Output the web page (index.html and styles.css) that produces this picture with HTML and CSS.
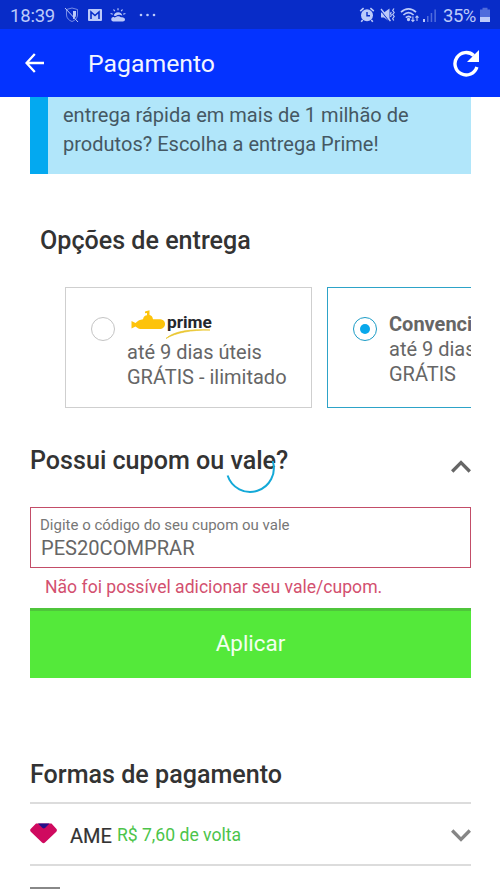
FILE: index.html
```html
<!DOCTYPE html>
<html lang="pt-BR">
<head>
<meta charset="utf-8">
<title>Pagamento</title>
<link rel="stylesheet" href="styles.css">
</head>
<body>
<div class="status">
  <span class="clock">18:39</span>
  <svg class="st-shield" width="16" height="16" viewBox="0 0 16 16" fill="none" stroke="currentColor"><path d="M2.500 2.500 8 1l5.500 1.500V8c0 3-2.500 5.500-5.500 6.500C5 13.500 2.500 11 2.500 8z" opacity=".6"/><path d="M9 4h3v4c0 2-1.500 3.500-3 4.300z" fill="currentColor" stroke="none"/><path d="M1 1l13 14" stroke-width="1"/></svg>
  <svg class="st-mail" width="14" height="12" viewBox="0 0 14 12"><rect width="14" height="12" rx="1" fill="currentColor"/><path d="M3 10V3l4 3.500L11 3v7" fill="none" stroke="#082cc8" stroke-width="1.600"/></svg>
  <svg class="st-weather" width="16" height="14" viewBox="0 0 16 14" fill="currentColor"><path d="M3 13.500a2.300 2.300 0 0 1 0-4.500c1 0 1.500.3 2 .6C6 8 9.500 7.500 11 9.300c2-.5 4 .5 4 2.200 0 1.200-.9 2-2.200 2z"/><path d="M3.800 7.800a4.300 4.300 0 0 1 8.500 0c-2-1.300-4.500-1.300-6.500.3z"/><path d="M8 .3v2M3.500 1.500l1.300 1.700M12.500 1.500l-1.300 1.700M.6 5.500l2.200.8M15.400 5.500l-2.200.8" stroke="currentColor" stroke-width="1.200"/></svg>
  <svg class="st-dots" width="17" height="4" viewBox="0 0 17 4" fill="currentColor"><circle cx="2" cy="2" r="1.300"/><circle cx="8.500" cy="2" r="1.300"/><circle cx="15" cy="2" r="1.300"/></svg>
  <span class="status-right">
    <svg width="16" height="16" viewBox="0 0 16 16" fill="none" stroke="currentColor"><circle cx="8" cy="8.300" r="6" fill="currentColor" stroke="none"/><path d="M8 5v3.800h3" stroke="#082cc8" stroke-width="1.400"/><path d="M1.200 4.200 4.600 1.200M14.800 4.200 11.400 1.200M3.700 13 2.200 14.800M12.300 13l1.500 1.800" stroke-width="1.600"/></svg>
    <svg class="st-mute" width="16" height="16" viewBox="0 0 16 16"><path d="M1 5.500h3L9.500 1.500v13L4 10.500H1z" fill="currentColor"/><path d="M.5 3 9.500 14.500" stroke="#082cc8" stroke-width="1.200"/><path d="M1 2 10.500 14" stroke="currentColor" stroke-width="1.300"/><path d="M14 1.500l-1.300 2 1.500 2-1.500 2 1.500 2-1.500 2 1 2M11.300 5l-.8 1.500.8 1.500-.8 2" fill="none" stroke="currentColor" stroke-width="1.200"/></svg>
    <svg class="st-wifi" width="20" height="16" viewBox="0 0 20 16" fill="none" stroke="currentColor" stroke-width="1.700"><path d="M1 5.200C5.500.7 11.500.7 16 5.200M3.400 8c3.200-3 7-3 10.200 0M5.800 10.600c1.800-1.600 3.800-1.600 5.400 0"/><circle cx="8.500" cy="12.500" r=".8" fill="currentColor"/><path d="M12.900 9.500v5M11.400 12.800l1.500 1.700 1.500-1.700M17 14V9M15.500 10.700 17 9l1.500 1.700" stroke-width="1.100"/></svg>
    <svg class="st-signal" width="14" height="15" viewBox="0 0 14 15" fill="currentColor"><path d="M0 11h2v3H0z"/><path d="M4 8h1.500v6H4zM7.700 5h1.500v9H7.700zM11.400 1.500h1.500V14h-1.500z" opacity=".4"/></svg>
    <span class="percent">35%</span>
    <svg class="st-battery" width="10" height="16" viewBox="0 0 10 16" fill="currentColor"><path d="M0 2.500h2.500V.8h5v1.700H10V15H0z" opacity=".4"/><path d="M0 10h10v5H0z"/></svg>
  </span>
</div>
<header class="appbar">
  <svg class="back" width="20" height="20" viewBox="0 0 20 20" fill="none" stroke="#fff" stroke-width="2.300"><path d="M9.800 1 1.500 10l8.300 9M1.500 10H19"/></svg>
  <h1>Pagamento</h1>
  <svg class="reload" width="28" height="28" viewBox="0 0 28 28"><path d="M21.800 6.500A11.200 11.200 0 1 0 24.900 18" fill="none" stroke="#fff" stroke-width="3.400"/><path d="M27 1v12H15z" fill="#fff"/></svg>
</header>
<main>
  <p class="banner">entrega rápida em mais de 1 milhão de<br>produtos? Escolha a entrega Prime!</p>
  <h2 class="delivery-title">Opções de entrega</h2>
  <div class="carousel">
    <div class="card">
      <span class="radio"></span>
      <div class="card-text prime">
        <div class="logo">
          <svg width="82" height="32" viewBox="0 0 82 32"><path d="M4.500 13C7 10.500 9 9.700 12 9.300 12.500 6.500 14 5.500 16 5.200V3l-2 .3V1.500L18.500.3V5c2 .3 3 1.500 3.500 4.200h6c4 0 6 2 6 4.700s-2 5.100-6 5.100H11c-3 0-4.500-1-6.500-2.600L.5 18.500v-7.500z" fill="#fdc30b"/><path d="M35 28.500C43 21 59 19 79 20 60 20 45 22.500 35 28.500z" fill="#eac52e" stroke="#eac52e" stroke-width=".7"/></svg>
          <b>prime</b>
        </div>
        <div>até 9 dias úteis</div>
        <div>GRÁTIS - ilimitado</div>
      </div>
    </div>
    <div class="card selected">
      <span class="radio"></span>
      <div class="card-text">
        <div class="strong">Convencional</div>
        <div>até 9 dias úteis</div>
        <div>GRÁTIS</div>
      </div>
    </div>
  </div>
  <div class="coupon-head">
    <h2>Possui cupom ou vale?</h2>
    <svg class="chev" width="20" height="13" viewBox="0 0 20 13" fill="none" stroke="#666" stroke-width="3.300"><path d="M1.200 11.500 10 2.500l8.800 9"/></svg>
    <svg class="spinner" width="50" height="50" viewBox="0 0 50 50" fill="none" stroke="#13a9d8" stroke-width="2"><path d="M2.600 31.500A23 23 0 0 0 47.700 17"/></svg>
  </div>
  <div class="field">
    <div class="label">Digite o código do seu cupom ou vale</div>
    <div class="value">PES20COMPRAR</div>
  </div>
  <p class="error">Não foi possível adicionar seu vale/cupom.</p>
  <div class="apply"><span>Aplicar</span></div>
  <h2 class="pay-title">Formas de pagamento</h2>
  <div class="pay-row">
    <svg class="ame" width="27" height="21" viewBox="0 0 27 21"><path d="M6 .5h15.500L26.500 6c.6.800.5 2-.2 2.700L15 19.500c-1 .9-2 .9-3 0L.8 8.700C0 8 0 6.800.6 6z" fill="#cf0a5f"/><path d="M8 .5h11.500l-4.500 4.500c-.8.600-1.700.6-2.500 0z" fill="#25108a"/></svg>
    <span class="ame-name">AME</span><span class="cashback">R$ 7,60 de volta</span>
    <svg class="chev" width="20" height="13" viewBox="0 0 20 13" fill="none" stroke="#868686" stroke-width="3.300"><path d="M1.200 1.500 10 10.500l8.800-9"/></svg>
  </div>
  <div class="next-row"><span class="card-icon"></span></div>
</main>
</body>
</html>
```
FILE: styles.css
```css
* { box-sizing: border-box; }
html { overflow: hidden; }
body {
  margin: 0;
  width: 500px;
  height: 889px;
  overflow: hidden;
  background: #fff;
  font-family: Roboto, "Liberation Sans", sans-serif;
  color: #666;
}
h1, h2, p { margin: 0; }
svg { display: block; flex: none; }
div, span, h1, h2, p { white-space: nowrap; }

.status {
  height: 29px;
  background: #082cc8;
  color: #bccafa;
  display: flex;
  align-items: center;
  padding: 1px 10px 0;
}
.clock { width: 54px; font-size: 18.5px; letter-spacing: -0.2px; padding-top: 1px; }
.st-mail { margin-left: 8px; }
.st-weather { margin-left: 8px; }
.st-dots { margin-left: 13px; }
.status-right { display: flex; align-items: center; margin-left: auto; }
.st-mute { margin-left: 5px; }
.st-wifi { margin-left: 4px; }
.st-signal { margin-left: 3px; }
.percent { margin-left: 6px; width: 33px; font-size: 18.5px; letter-spacing: -0.5px; padding-top: 1px; }
.st-battery { margin-left: 4px; }

.appbar {
  height: 68px;
  background: #0433ff;
  display: flex;
  align-items: center;
  padding: 0 20px 0 25px;
}
.back { margin-top: 0; }
h1 {
  margin: 2px 0 0 43px;
  font-size: 24.8px;
  font-weight: 400;
  line-height: 30px;
  color: #f2f5ff;
}
.reload { margin-left: auto; }

main { width: 441px; margin-left: 30px; }
.banner {
  height: 77px;
  border-left: 18px solid #03a9f0;
  background: #b1e6fa;
  padding: 4px 0 0 15px;
  font-size: 20.05px;
  line-height: 29px;
  color: #455863;
}
h2 {
  font-size: 25.1px;
  font-weight: 500;
  line-height: 30px;
  color: #333;
}
.delivery-title { margin: 52px 0 0 10px; }
.carousel {
  display: flex;
  gap: 15px;
  margin-top: 31px;
  padding-left: 35px;
  overflow: hidden;
}
.card {
  flex: none;
  width: 247px;
  height: 121px;
  border: 1px solid #cfcfcf;
  display: flex;
  font-size: 20px;
  line-height: 25px;
}
.selected { border-color: #2da3c8; }
.radio {
  flex: none;
  width: 24px;
  height: 24px;
  margin: 29px 0 0 25px;
  border: 1px solid #c4c4c4;
  border-radius: 50%;
  display: flex;
  align-items: center;
  justify-content: center;
}
.selected .radio { border-color: #1c9cc6; }
.selected .radio::after {
  content: "";
  width: 10px;
  height: 10px;
  border-radius: 50%;
  background: #08a8eb;
}
.card-text { padding: 24px 0 0 12px; }
.strong { font-weight: 700; }
.prime { padding-top: 22px; }
.logo { position: relative; height: 30px; padding-left: 4px; }
.logo b {
  position: absolute;
  left: 40px;
  top: 0;
  font-size: 17.3px;
  color: #24272c;
}

.coupon-head {
  position: relative;
  margin-top: 38px;
  display: flex;
  justify-content: space-between;
}
.coupon-head .chev { margin-top: 14px; }
.spinner { position: absolute; left: 195px; top: -2px; }
.field {
  height: 61px;
  margin-top: 31px;
  border: 1px solid #c34d68;
  padding: 7px 0 0 9px;
}
.label { font-size: 15px; line-height: 20px; color: #777; }
.value { margin-left: 1px; font-size: 20.1px; line-height: 26px; }
.error { margin: 5px 0 0 15px; font-size: 17.6px; line-height: 28px; color: #d3506f; }
.apply {
  height: 70px;
  margin-top: 7px;
  padding-bottom: 3px;
  border-top: 3px solid #4fc53b;
  background: #54e93a;
  color: #f2fff0;
  font-size: 22.4px;
  display: flex;
  align-items: center;
  justify-content: center;
}
.pay-title { margin-top: 82px; }
.pay-row {
  height: 64px;
  margin-top: 12px;
  border-top: 2px solid #dcdcdc;
  border-bottom: 2px solid #dcdcdc;
  display: flex;
  align-items: center;
}
.ame { margin-top: -2px; }
.ame-name { margin: 3px 0 0 13px; font-size: 20px; color: #333; -webkit-text-stroke: 0.2px #333; }
.cashback { margin: 1px 0 0 5px; font-size: 17.6px; color: #4cc44a; }
.pay-row .chev { margin: 2px 0 0 auto; }
.card-icon { display: block; width: 30px; height: 20px; margin-top: 21px; background: #888; }
```
